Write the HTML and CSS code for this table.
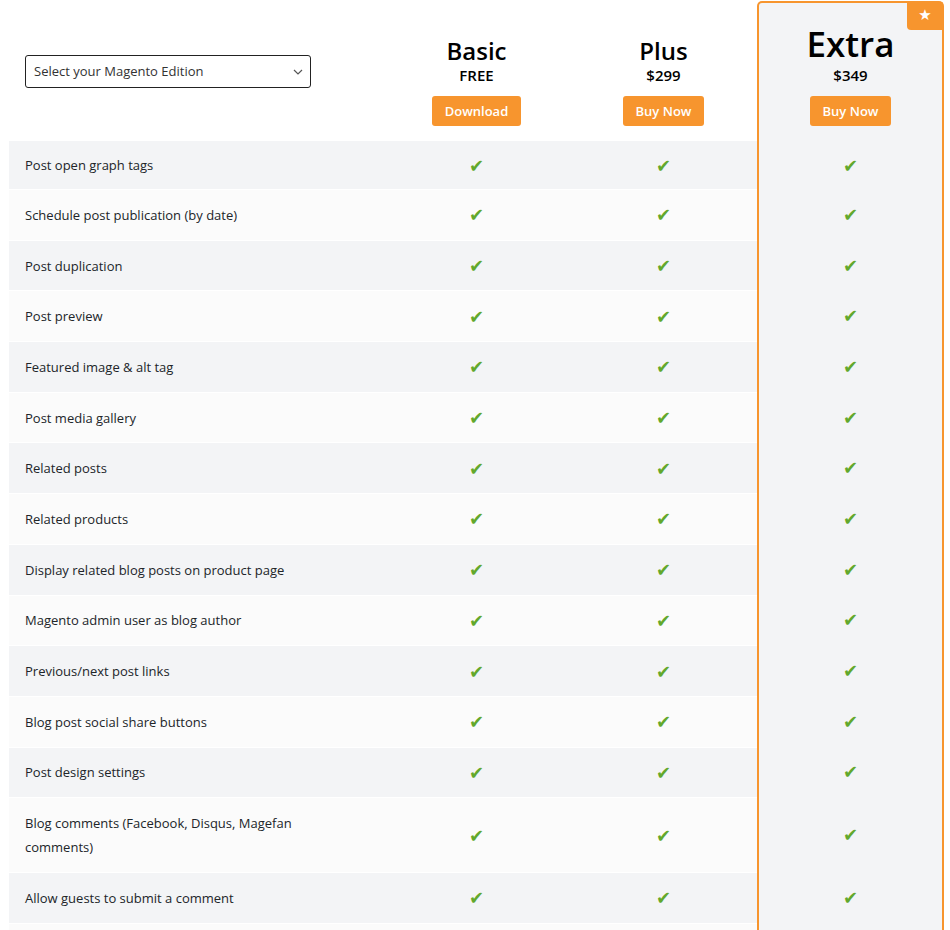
FILE: index.html
```html
<!DOCTYPE html>
<html lang="en">
<head>
<meta charset="utf-8">
<title>Magento Blog Extension Comparison</title>
<link rel="stylesheet" href="styles.css">
</head>
<body>
<div class="compare">
  <div class="head">
    <div class="head-label">
      <div class="select-wrap">
        <select class="edition">
          <option>Select your Magento Edition</option>
          <option>Magento Open Source</option>
          <option>Adobe Commerce</option>
        </select>
        <svg class="chev" width="10" height="6" viewBox="0 0 10 6"><path d="M1 1l4 4 4-4" fill="none" stroke="#555" stroke-width="1.2"/></svg>
      </div>
    </div>
    <div class="plan">
      <div class="plan-name">Basic</div>
      <div class="plan-price">FREE</div>
      <a class="btn">Download</a>
    </div>
    <div class="plan">
      <div class="plan-name">Plus</div>
      <div class="plan-price">$299</div>
      <a class="btn">Buy Now</a>
    </div>
    <div class="plan plan-extra">
      <span class="badge">★</span>
      <div class="plan-name big">Extra</div>
      <div class="plan-price">$349</div>
      <a class="btn">Buy Now</a>
    </div>
  </div>

  <div class="row first"><div class="feat">Post open graph tags</div><div class="c">✔</div><div class="c">✔</div><div class="x">✔</div></div>
  <div class="row"><div class="feat">Schedule post publication (by date)</div><div class="c">✔</div><div class="c">✔</div><div class="x">✔</div></div>
  <div class="row"><div class="feat">Post duplication</div><div class="c">✔</div><div class="c">✔</div><div class="x">✔</div></div>
  <div class="row"><div class="feat">Post preview</div><div class="c">✔</div><div class="c">✔</div><div class="x">✔</div></div>
  <div class="row"><div class="feat">Featured image &amp; alt tag</div><div class="c">✔</div><div class="c">✔</div><div class="x">✔</div></div>
  <div class="row"><div class="feat">Post media gallery</div><div class="c">✔</div><div class="c">✔</div><div class="x">✔</div></div>
  <div class="row"><div class="feat">Related posts</div><div class="c">✔</div><div class="c">✔</div><div class="x">✔</div></div>
  <div class="row"><div class="feat">Related products</div><div class="c">✔</div><div class="c">✔</div><div class="x">✔</div></div>
  <div class="row"><div class="feat">Display related blog posts on product page</div><div class="c">✔</div><div class="c">✔</div><div class="x">✔</div></div>
  <div class="row"><div class="feat">Magento admin user as blog author</div><div class="c">✔</div><div class="c">✔</div><div class="x">✔</div></div>
  <div class="row"><div class="feat">Previous/next post links</div><div class="c">✔</div><div class="c">✔</div><div class="x">✔</div></div>
  <div class="row"><div class="feat">Blog post social share buttons</div><div class="c">✔</div><div class="c">✔</div><div class="x">✔</div></div>
  <div class="row"><div class="feat">Post design settings</div><div class="c">✔</div><div class="c">✔</div><div class="x">✔</div></div>
  <div class="row"><div class="feat">Blog comments (Facebook, Disqus, Magefan comments)</div><div class="c">✔</div><div class="c">✔</div><div class="x">✔</div></div>
  <div class="row"><div class="feat">Allow guests to submit a comment</div><div class="c">✔</div><div class="c">✔</div><div class="x">✔</div></div>
  <div class="row filler" aria-hidden="true"><div class="feat"></div><div class="c"></div><div class="c"></div><div class="x"></div></div>
</div>
</body>
</html>
```

FILE: styles.css
```css
* { box-sizing: border-box; }

html, body {
  margin: 0;
  padding: 0;
  background: #fff;
}

body {
  font-family: "Open Sans", "DejaVu Sans", sans-serif;
  color: #212529;
  font-size: 13px;
}

.compare {
  width: 935px;
  margin: 1px 0 0 9px;
}

.head,
.row {
  display: grid;
  grid-template-columns: 374px 187px 187px 187px;
}

.head { height: 140px; }

.head-label {
  display: flex;
  align-items: center;
  padding-left: 16px;
}

.select-wrap {
  position: relative;
  width: 286px;
}

.edition {
  appearance: none;
  -webkit-appearance: none;
  width: 286px;
  height: 33px;
  border: 1px solid #222;
  border-radius: 3px;
  background: #fff;
  padding: 0 24px 0 8px;
  font-family: "Open Sans", sans-serif;
  font-size: 13px;
  color: #333;
}

.chev {
  position: absolute;
  right: 8px;
  top: 14px;
  pointer-events: none;
}

.plan {
  display: flex;
  flex-direction: column;
  align-items: center;
  justify-content: flex-end;
  padding-bottom: 15px;
}

.plan-name {
  font-size: 24px;
  font-weight: 600;
  line-height: 30px;
  color: #000;
}

.plan-name.big {
  font-size: 35px;
  line-height: 44px;
}

.plan-price {
  font-size: 15px;
  font-weight: 600;
  line-height: 18px;
  color: #000;
}

.btn {
  margin-top: 12px;
  height: 30px;
  line-height: 30px;
  padding: 0 13px;
  background: #f7952e;
  color: #fff;
  border-radius: 3px;
  font-size: 13px;
  font-weight: 600;
}

.plan-extra {
  position: relative;
  background: #f3f4f6;
  border: 2px solid #f7952e;
  border-bottom: 0;
  border-radius: 5px 5px 0 0;
}

.badge {
  position: absolute;
  top: -1px;
  right: -1px;
  width: 36px;
  height: 28px;
  background: #f7952e;
  color: #fff;
  border-radius: 0 4px 0 4px;
  font-family: "DejaVu Sans", sans-serif;
  font-size: 15px;
  line-height: 27px;
  text-align: center;
}

.feat,
.c {
  background: #f3f4f6;
  border-top: 1px solid #fff;
}

.row:nth-child(odd) .feat,
.row:nth-child(odd) .c {
  background: #fbfbfb;
}

.feat {
  padding: 12.85px 80px 12.85px 16px;
  line-height: 24px;
}

.row.filler .feat { min-height: 50px; }

.row.first .feat { padding-top: 11px; padding-bottom: 12px; }
.row.first .feat, .row.first .c { border-top: 1px solid transparent; }

.c,
.x {
  display: flex;
  align-items: center;
  justify-content: center;
  color: #62a82c;
  font-family: "DejaVu Sans", sans-serif;
  font-size: 18px;
}

.x {
  background: #f3f4f6;
  border-left: 2px solid #f7952e;
  border-right: 2px solid #f7952e;
}
```
